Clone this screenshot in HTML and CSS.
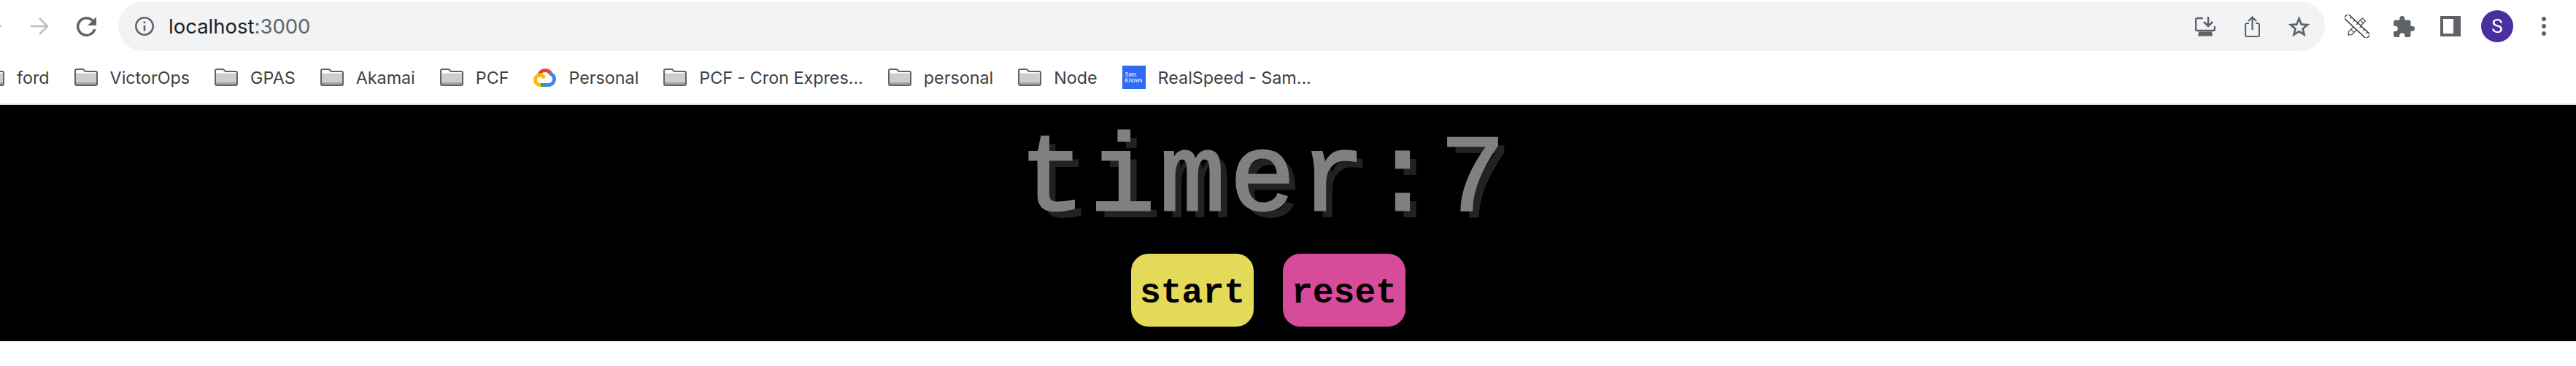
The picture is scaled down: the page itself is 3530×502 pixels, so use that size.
FILE: index.html
```html
<!DOCTYPE html>
<html lang="en">
<head>
<meta charset="utf-8">
<title>Timer</title>
<link rel="stylesheet" href="styles.css">
</head>
<body>
<svg class="defs" width="0" height="0" aria-hidden="true">
  <symbol id="folder" viewBox="0 0 32 24">
    <path d="M1 3a2 2 0 0 1 2-2h9l3 3h14a2 2 0 0 1 2 2v15a2 2 0 0 1-2 2H3a2 2 0 0 1-2-2z" fill="#fff"/>
    <rect x="2" y="6.5" width="28" height="12.5" fill="#cdcdcd"/>
    <rect x="2" y="19" width="28" height="3.5" fill="#a2a2a2"/>
    <path d="M1 3a2 2 0 0 1 2-2h9l3 3h14a2 2 0 0 1 2 2v15a2 2 0 0 1-2 2H3a2 2 0 0 1-2-2z" fill="none" stroke="#5f6368" stroke-width="2"/>
  </symbol>
</svg>
<header class="toolbar">
  <svg class="ic back" viewBox="0 0 26 26"><path d="M25 13H2M13 2 2 13l11 11" fill="none" stroke="#bdbdbd" stroke-width="2.5"/></svg>
  <svg class="ic forward" viewBox="0 0 26 26"><path d="M1 13h23M13 2l11 11-11 11" fill="none" stroke="#bdbdbd" stroke-width="2.5"/></svg>
  <svg class="ic reload" viewBox="4 4 16 16"><path fill="#5f6368" d="M17.65 6.35A7.96 7.96 0 0 0 12 4a8 8 0 1 0 7.73 10h-2.08A6 6 0 1 1 12 6c1.66 0 3.14.69 4.22 1.78L13 11h7V4l-2.35 2.35z"/></svg>
  <div class="omnibox">
    <svg class="ic info" viewBox="2 2 20 20"><path fill="#5f6368" d="M11 7h2v2h-2zm0 4h2v6h-2zm1-9C6.48 2 2 6.48 2 12s4.48 10 10 10 10-4.48 10-10S17.52 2 12 2zm0 18c-4.41 0-8-3.59-8-8s3.59-8 8-8 8 3.59 8 8-3.59 8-8 8z"/></svg>
    <span class="url">localhost<span class="port">:3000</span></span>
    <svg class="ic install" viewBox="0 0 28 27"><path d="M11 2H3a2 2 0 0 0-2 2v13a2 2 0 0 0 2 2h22a2 2 0 0 0 2-2v-4" fill="none" stroke="#5f6368" stroke-width="2.4"/><path d="M18 0v12M12 7l6 6 6-6" fill="none" stroke="#5f6368" stroke-width="2.6"/><path d="M5 20.500h18l1 6H4z" fill="#5f6368"/></svg>
    <svg class="ic share" viewBox="0 0 21 29"><path d="M6 10H3a2 2 0 0 0-2 2v14a2 2 0 0 0 2 2h15a2 2 0 0 0 2-2V12a2 2 0 0 0-2-2h-3" fill="none" stroke="#5f6368" stroke-width="2.2"/><path d="M10.500 19V2M5 7l5.500-5.500L16 7" fill="none" stroke="#5f6368" stroke-width="2.2"/></svg>
    <svg class="ic star" viewBox="0 0 29 28"><path d="M14.500 3.500l3.200 7.900 8.300.6-6.400 5.400 2 8.200-7.100-4.500-7.100 4.500 2-8.200L3 12l8.300-.6z" fill="none" stroke="#5f6368" stroke-width="2.6"/></svg>
  </div>
  <svg class="ic tools" viewBox="0 0 34 32">
    <g transform="rotate(-45 17 16)"><path d="M0 16l4-3h26v6H4z" fill="#fff" stroke="#5f6368" stroke-width="1.500"/><path d="M8 13v6M26 13v6" stroke="#5f6368" stroke-width="1.200"/></g>
    <g transform="rotate(43 17 16)"><rect x="-4" y="12" width="42" height="8" fill="#fff" stroke="#444" stroke-width="1.600"/><path d="M3 12v3M9 12v3M15 12v3M21 12v3M27 12v3M33 12v3" stroke="#444" stroke-width="1.200"/></g>
  </svg>
  <svg class="ic puzzle" viewBox="2 1 21 21"><path fill="#5f6368" d="M20.500 11H19V7c0-1.100-.9-2-2-2h-4V3.500a2.500 2.500 0 0 0-5 0V5H4c-1.100 0-1.990.9-1.990 2v3.800H3.500c1.490 0 2.700 1.210 2.700 2.700s-1.210 2.700-2.700 2.700H2V20c0 1.100.9 2 2 2h3.800v-1.500c0-1.490 1.210-2.700 2.700-2.700s2.700 1.210 2.700 2.700V22H17c1.100 0 2-.9 2-2v-4h1.500a2.500 2.500 0 0 0 0-5z"/></svg>
  <div class="sidebar-btn"><span class="sidebar-pane"></span></div>
  <div class="avatar">S</div>
  <div class="menu"><span class="dot"></span><span class="dot"></span><span class="dot"></span></div>
</header>
<nav class="bookmarks">
  <a class="bm first"><svg class="folder"><use href="#folder"/></svg><span>ford</span></a>
  <a class="bm"><svg class="folder"><use href="#folder"/></svg><span>VictorOps</span></a>
  <a class="bm"><svg class="folder"><use href="#folder"/></svg><span>GPAS</span></a>
  <a class="bm"><svg class="folder"><use href="#folder"/></svg><span>Akamai</span></a>
  <a class="bm"><svg class="folder"><use href="#folder"/></svg><span>PCF</span></a>
  <a class="bm"><svg class="gcloud" viewBox="0 0 31 25" fill="none" stroke-width="5"><path stroke="#ea4335" d="M8 9c1-5 5-6.500 8-6.500 4 0 7 2.500 8 5.500"/><path stroke="#4285f4" d="M23 7c4 1.500 5.500 4 5.500 7 0 5-3.500 8.500-8.500 8.500h-5"/><path stroke="#34a853" d="M15.500 22.500H9.500"/><path stroke="#fbbc05" d="M10 22.500c-5 0-7.500-3.500-7.500-7s2.500-6.500 6.500-6.500c3 0 5 2 6 4"/></svg><span>Personal</span></a>
  <a class="bm"><svg class="folder"><use href="#folder"/></svg><span>PCF - Cron Expres...</span></a>
  <a class="bm"><svg class="folder"><use href="#folder"/></svg><span>personal</span></a>
  <a class="bm"><svg class="folder"><use href="#folder"/></svg><span>Node</span></a>
  <a class="bm"><div class="samknows">Sam<br>Knows</div><span>RealSpeed - Sam...</span></a>
</nav>
<main class="app">
  <h1 class="timer">timer:7</h1>
  <div class="actions">
    <button class="btn start">start</button>
    <button class="btn reset">reset</button>
  </div>
</main>
</body>
</html>
```
FILE: styles.css
```css
* { box-sizing: border-box; }
html, body { margin: 0; padding: 0; background: #fff; overflow: hidden; }
body { font-family: "Inter", "Liberation Sans", sans-serif; }
.defs { position: absolute; }
.ic { display: block; flex: none; }

.toolbar { display: flex; align-items: center; height: 72px; }
.back { width: 26px; height: 26px; margin-left: -23px; }
.forward { width: 26px; height: 26px; margin-left: 38px; }
.reload { width: 27px; height: 27px; margin-left: 38px; }
.omnibox {
  display: flex; align-items: center; flex: none;
  width: 3024px; height: 68px; margin-left: 30px;
  padding-left: 23px; background: #f1f3f4; border-radius: 34px;
}
.info { width: 26px; height: 26px; }
.url { margin-left: 20px; font-size: 27.500px; color: #202124; flex: 1; }
.port { color: #5f6368; }
.install { width: 28px; height: 27px; }
.share { width: 21px; height: 29px; margin-left: 40px; }
.star { width: 29px; height: 28px; margin-left: 39px; margin-right: 21px; }
.tools { width: 34px; height: 32px; margin-left: 27px; }
.puzzle { width: 29px; height: 29px; margin-left: 33px; }
.sidebar-btn { width: 28px; height: 28px; margin-left: 35px; padding: 4px 10px 4px 4px; background: #5f6368; flex: none; }
.sidebar-pane { display: block; width: 100%; height: 100%; background: #fff; }
.avatar {
  width: 44px; height: 44px; margin-left: 28px; border-radius: 50%; flex: none;
  display: flex; align-items: center; justify-content: center;
  background: #4a2f9f; color: #fff; font: 26px "Roboto", sans-serif;
}
.menu { display: flex; flex-direction: column; gap: 4px; margin-left: 39px; }
.dot { width: 6px; height: 6px; border-radius: 50%; background: #5f6368; }

.bookmarks {
  display: flex; align-items: center; gap: 34px; height: 72px; padding-bottom: 2px;
  margin-left: -26px; border-bottom: 2px solid #dadce0;
  font-size: 23.300px; color: #3c4043; white-space: nowrap;
}
.bm { display: flex; align-items: center; gap: 17px; flex: none; }
.folder { width: 32px; height: 24px; flex: none; }
.gcloud { width: 31px; height: 25px; flex: none; }
.samknows {
  width: 32px; height: 32px; flex: none; background: #2e6bf2; color: #fff;
  font-size: 7.500px; line-height: 7.500px; padding: 9px 0 0 4px;
}

.app {
  display: flex; flex-direction: column; align-items: center;
  height: 324px; padding-right: 54px; background: #000;
}
.timer {
  margin: 0; padding: 24px 10px 0 0; font: 400 150px/160px "Liberation Mono", monospace;
  letter-spacing: 6px; color: #808080; text-shadow: 10px 10px 0 #222;
  -webkit-text-stroke: 3px #808080;
}
.actions { display: flex; gap: 40px; margin-top: 20px; }
.btn {
  width: 168px; height: 100px; padding: 8px 0 0; border: 0; border-radius: 24px;
  font: 700 48px "Liberation Mono", monospace; color: #000;
}
.start { background: #e4da5a; }
.reset { background: #d64b9a; }
```
